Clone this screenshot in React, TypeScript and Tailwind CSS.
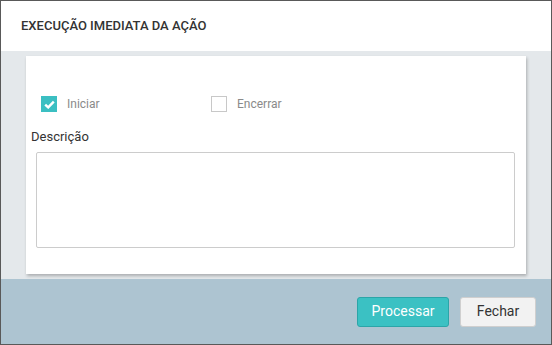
import React from "react";

const CheckBox: React.FC<{ checked?: boolean; label: string }> = ({ checked, label }) => (
  <label className="flex items-center gap-[10px] w-[170px]">
    {checked ? (
      <span className="flex items-center justify-center w-[16px] h-[16px] bg-[#3bbfc2]">
        <svg width="11" height="9" viewBox="0 0 11 9">
          <path d="M1.2 4.6 L4.2 7.4 L9.8 1.6" fill="none" stroke="#fff" strokeWidth="2.4" />
        </svg>
      </span>
    ) : (
      <span className="w-[16px] h-[16px] border border-[#c8c8c8] bg-white" />
    )}
    <span className="text-[12px] text-[#8a8a8a]">{label}</span>
  </label>
);

export default function App() {
  return (
    <div
      className="w-[552px] h-[345px] border border-[#595959] flex flex-col bg-white"
      style={{ fontFamily: "Roboto, 'Liberation Sans', sans-serif" }}
    >
      <div className="h-[50px] flex items-center px-[20px]">
        <h3 className="text-[13px] font-medium text-[#333]">EXECUÇÃO IMEDIATA DA AÇÃO</h3>
      </div>
      <div className="flex-1 bg-[#e4e8eb] px-[25px] py-[5px]">
        <div className="h-full bg-white shadow-[1px_2px_3px_rgba(0,0,0,0.25)] pt-[39px] pl-[5px] pr-[11px]">
          <div className="flex pl-[10px]">
            <CheckBox checked label="Iniciar" />
            <CheckBox label="Encerrar" />
          </div>
          <div className="mt-[16px] text-[13px] text-[#333] leading-[16px]">Descrição</div>
          <textarea className="mt-[7px] ml-[5px] block w-[479px] h-[96px] border border-[#cccccc] rounded-[2px] resize-none outline-none" />
        </div>
      </div>
      <div className="h-[65px] bg-[#adc4d1] flex items-center justify-end gap-[11px] pr-[15px]">
        <button className="w-[92px] h-[30px] bg-[#3bc1c3] border border-[#2ca5a8] rounded-[3px] text-white text-[14px]">
          Processar
        </button>
        <button className="w-[76px] h-[30px] bg-[#f2f2f2] border border-[#cfcfcf] rounded-[3px] text-[#333] text-[14px]">
          Fechar
        </button>
      </div>
    </div>
  );
}
